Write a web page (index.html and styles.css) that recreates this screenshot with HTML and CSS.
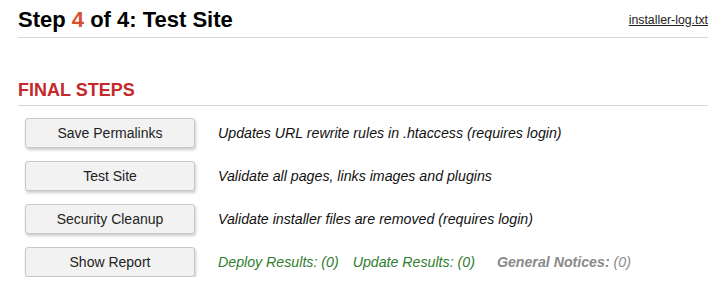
FILE: index.html
```html
<!DOCTYPE html>
<html>
<head>
<meta charset="utf-8">
<link rel="stylesheet" href="styles.css">
</head>
<body>
<div class="page">
  <div class="hdr">
    <h1 class="title">Step <span class="num">4</span> of 4: Test Site</h1>
    <a class="log" href="#">installer-log.txt</a>
  </div>
  <h2 class="section">FINAL STEPS</h2>
  <div class="rows">
    <div class="row">
      <button class="btn">Save Permalinks</button>
      <span class="desc">Updates URL rewrite rules in .htaccess (requires login)</span>
    </div>
    <div class="row">
      <button class="btn">Test Site</button>
      <span class="desc">Validate all pages, links images and plugins</span>
    </div>
    <div class="row">
      <button class="btn">Security Cleanup</button>
      <span class="desc">Validate installer files are removed (requires login)</span>
    </div>
    <div class="row">
      <button class="btn">Show Report</button>
      <span class="desc results">
        <span class="ok">Deploy Results: (0)</span>
        <span class="ok">Update Results: (0)</span>
        <span class="notice"><b>General Notices:</b> (0)</span>
      </span>
    </div>
  </div>
</div>
</body>
</html>
```

FILE: styles.css
```css
html, body {
  margin: 0;
  padding: 0;
  background: #fff;
  font-family: "Liberation Sans", Arial, sans-serif;
}
.page {
  width: 690px;
  margin-left: 18px;
}
.hdr {
  display: flex;
  justify-content: space-between;
  align-items: flex-end;
  border-bottom: 1px solid #d6d6d6;
  height: 38px;
  box-sizing: border-box;
  padding-bottom: 4px;
}
.title {
  margin: 0;
  font-size: 22px;
  font-weight: bold;
  color: #000;
  line-height: 26px;
}
.num {
  color: #d3512e;
}
.log {
  font-size: 12.3px;
  color: #222;
  text-decoration: underline;
  line-height: 14px;
  margin-bottom: 6px;
}
.section {
  margin: 41px 0 0 0;
  font-size: 18px;
  font-weight: bold;
  color: #c42a2a;
  line-height: 22px;
  padding-bottom: 4px;
  border-bottom: 1px solid #d6d6d6;
}
.rows {
  display: flex;
  flex-direction: column;
  gap: 13px;
  padding: 12px 0 0 7px;
}
.row {
  display: flex;
  align-items: center;
  gap: 23px;
}
.btn {
  width: 170px;
  height: 30px;
  font-family: "Liberation Sans", Arial, sans-serif;
  font-size: 14px;
  color: #222;
  background: #f2f2f2;
  border: 1px solid #c8c8c8;
  border-radius: 3px;
  box-shadow: 1px 2px 3px rgba(0,0,0,0.2);
  padding: 0;
}
.desc {
  font-size: 14.2px;
  font-style: italic;
  color: #111;
}
.results {
  display: flex;
  gap: 14px;
}
.ok {
  color: #2f7d2f;
}
.notice {
  color: #8a8a8a;
  margin-left: 8px;
}
```
